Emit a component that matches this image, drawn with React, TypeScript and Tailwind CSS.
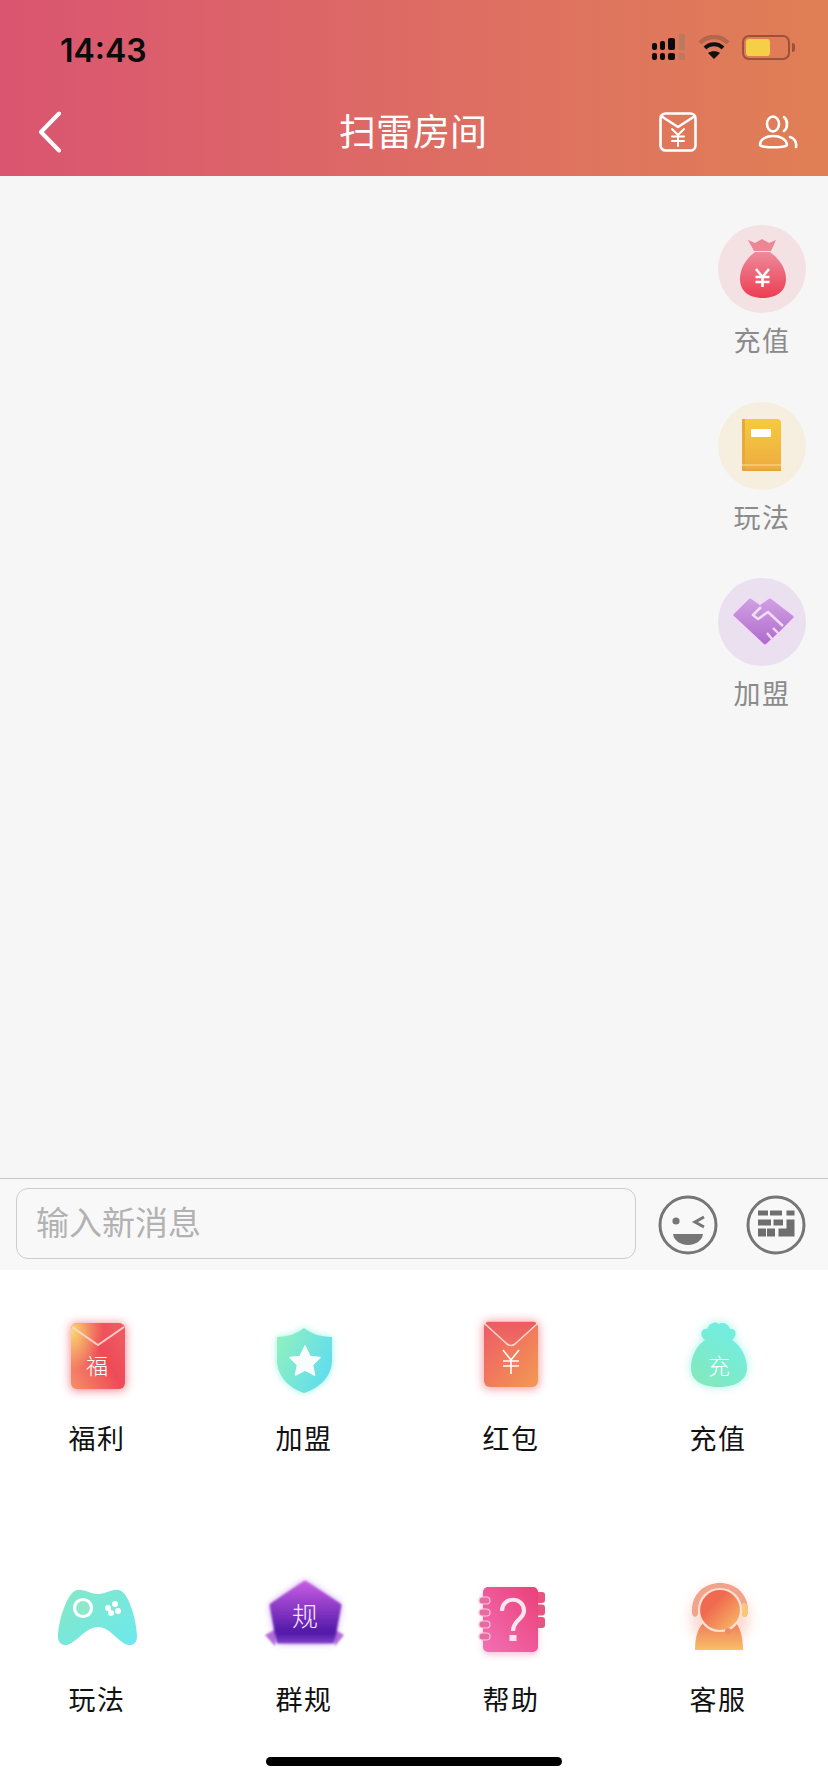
const cjk = { fontFamily: '"Noto Sans CJK SC", sans-serif' };

function BackIcon() {
  return (
    <svg width="24" height="42" viewBox="0 0 24 42" fill="none" className="ml-[10px]">
      <path d="M21 2.5 L3 21 L21 39.5" stroke="#fff" strokeWidth="4" strokeLinecap="round" strokeLinejoin="round" />
    </svg>
  );
}

function PacketIcon() {
  return (
    <svg width="38" height="40" viewBox="0 0 38 40" fill="none" stroke="#fff" strokeWidth="2.6" strokeLinecap="round" strokeLinejoin="round">
      <rect x="1.5" y="1.5" width="35" height="37" rx="5" />
      <path d="M2 4 L19 15 L36 4" />
      <path d="M13 17 L19 23 L25 17 M19 23 V34 M13 24.5 H25 M13 29 H25" strokeWidth="2" />
    </svg>
  );
}

function UsersIcon() {
  return (
    <svg width="40" height="34" viewBox="0 0 40 34" fill="none" stroke="#fff" strokeWidth="2.6" strokeLinecap="round">
      <ellipse cx="15" cy="9" rx="6" ry="7.5" />
      <path d="M26 2 C30 5 30 13 26 16" />
      <path d="M2 30 C2 18 28 18 29 30 C29 33 2 33 2 30 Z" />
      <path d="M32 22 C36 23 39 27 38 32" />
    </svg>
  );
}

function SignalIcon() {
  return (
    <svg width="34" height="27" viewBox="0 0 34 27">
      <g fill="#0b0b0b">
        <rect x="0" y="9" width="5" height="7" rx="2" />
        <rect x="0" y="19" width="5" height="7" rx="2" />
        <rect x="8" y="7" width="5" height="9" rx="2" />
        <rect x="8" y="19" width="5" height="7" rx="2" />
        <rect x="16" y="4" width="7" height="12" rx="2" />
        <rect x="16" y="19" width="7" height="7" rx="2" />
      </g>
      <g fill="#b97a5f">
        <rect x="27" y="0" width="6" height="16" rx="1" />
        <rect x="27" y="19" width="6" height="7" rx="1" />
      </g>
    </svg>
  );
}

function WifiIcon() {
  return (
    <svg width="32" height="25" viewBox="0 0 32 25" fill="none" strokeLinecap="butt">
      <path d="M2 8 C10 0 22 0 30 8" stroke="#b5654c" strokeWidth="4.5" />
      <path d="M7 13 C12 8 20 8 25 13" stroke="#111" strokeWidth="4" />
      <path d="M16 24 L10 18 C13 15.5 19 15.5 22 18 Z" fill="#111" />
    </svg>
  );
}

function BatteryIcon() {
  return (
    <div className="flex items-center">
      <div className="w-[48px] h-[25px] rounded-[7px] border-[2.5px] border-[#9c5139] p-[2px] flex">
        <div className="w-[24px] h-full rounded-[3px] bg-[#f5cf45]" />
      </div>
      <div className="w-[3px] h-[9px] ml-[2px] rounded-r-[3px] bg-[#9c5139]" />
    </div>
  );
}

function MoneyBag() {
  return (
    <svg width="88" height="88" viewBox="0 0 88 88">
      <defs>
        <linearGradient id="sbag" x1="0" y1="0" x2="0" y2="1">
          <stop offset="0" stopColor="#ec8b9b" />
          <stop offset="1" stopColor="#ee3c52" />
        </linearGradient>
      </defs>
      <path d="M30 15 L37 18 L44 14 L51 18 L58 15 L53 26 H36 Z" fill="#ec8695" />
      <path d="M37 27 H52 C60 33 68 42 68 54 C68 67 57 73 45 73 C32 73 22 67 22 54 C22 42 29 33 37 27 Z" fill="url(#sbag)" />
      <path d="M38 44 L44.5 52 L51 44 M44.5 52 V62 M37.5 52 H51.5 M37.5 57 H51.5" fill="none" stroke="#fff" strokeWidth="2.6" />
    </svg>
  );
}

function BookIcon() {
  return (
    <svg width="88" height="88" viewBox="0 0 88 88">
      <defs>
        <linearGradient id="sbook" x1="0" y1="0" x2="0" y2="1">
          <stop offset="0" stopColor="#f6ca3d" />
          <stop offset="1" stopColor="#edac42" />
        </linearGradient>
      </defs>
      <path d="M24 17 H59 Q63 17 63 21 V69 H27 Q24 69 24 66 Z" fill="url(#sbook)" />
      <rect x="24" y="17" width="3" height="52" fill="#e9a93a" />
      <rect x="24" y="62" width="39" height="2" fill="#f3c86f" />
      <rect x="24" y="67" width="39" height="2" fill="#e7a43a" />
      <rect x="33" y="27" width="20" height="8" rx="1" fill="#fff" />
    </svg>
  );
}

function HandshakeIcon() {
  const outline = "M17 37 L32 22 L42 29 L52 22 L74 39 L60 53 L47 65 Z";
  return (
    <svg width="88" height="88" viewBox="0 0 88 88">
      <defs>
        <linearGradient id="shand" x1="0" y1="0" x2="0" y2="1">
          <stop offset="0" stopColor="#cf9fe2" />
          <stop offset="1" stopColor="#b06ccd" />
        </linearGradient>
      </defs>
      <path d={outline} fill="#f3d9f8" stroke="#f3d9f8" strokeWidth="6" strokeLinejoin="round" />
      <path d={outline} fill="url(#shand)" stroke="url(#shand)" strokeWidth="3" strokeLinejoin="round" />
      <path d="M43 29 L35 37 L40 41 L50 34 L65 48" fill="none" stroke="#f0dcf6" strokeWidth="2.6" strokeLinejoin="round" />
      <path d="M49 55 L54 61 M55 50 L60 55" stroke="#f0dcf6" strokeWidth="2.4" />
    </svg>
  );
}

function SideItem({ label, bg, children }: { label: string; bg: string; children: React.ReactNode }) {
  return (
    <div className="flex flex-col items-center w-[88px] h-[176.5px]">
      <div className={`w-[88px] h-[88px] rounded-full ${bg}`}>{children}</div>
      <div className="mt-[9px] text-[27px] leading-[36px] tracking-[1.5px] text-[#8b8b8b]">{label}</div>
    </div>
  );
}

function WinkIcon() {
  return (
    <svg width="60" height="60" viewBox="0 0 60 60" fill="none">
      <circle cx="30" cy="30" r="28" stroke="#767676" strokeWidth="3" />
      <circle cx="18" cy="26" r="3.6" fill="#767676" />
      <path d="M46 22 L37 27 L46 32" stroke="#767676" strokeWidth="3" />
      <path d="M15 39 H45 C44 46 37 50 30 50 C23 50 16 46 15 39 Z" fill="#767676" />
    </svg>
  );
}

function KeyboardIcon() {
  const keys = [
    [12, 15.5, 10, 5], [24, 15.5, 12, 5], [40.5, 15.5, 8, 5],
    [12, 24.5, 13, 6], [27.5, 24.5, 9.5, 6],
    [12, 33.5, 8, 8], [21, 33.5, 8, 8],
  ];
  return (
    <svg width="60" height="60" viewBox="0 0 60 60" fill="none">
      <circle cx="30" cy="30" r="28" stroke="#767676" strokeWidth="3" />
      {keys.map(([x, y, w, h]) => (
        <rect key={`${x}-${y}`} x={x} y={y} width={w} height={h} fill="#6e6e6e" />
      ))}
      <path d="M40.5 24.5 H48.5 V41.5 H32.5 V33.5 H40.5 Z" fill="#6e6e6e" />
    </svg>
  );
}

function Glow({ id, sd = 5 }: { id: string; sd?: number }) {
  return (
    <filter id={id} x="-50%" y="-50%" width="200%" height="200%">
      <feGaussianBlur stdDeviation={sd} />
    </filter>
  );
}

function GlyphText({ x, y, size, children, fill = "#fff" }: { x: number; y: number; size: number; children: string; fill?: string }) {
  return (
    <text x={x} y={y} fontSize={size} fill={fill} textAnchor="middle" fontFamily='"Noto Sans CJK SC", sans-serif' fontWeight="300">
      {children}
    </text>
  );
}

function FuliIcon() {
  return (
    <>
      <defs>
        <linearGradient id="fuli" x1="0" y1="1" x2="1" y2="0.3">
          <stop offset="0" stopColor="#f59068" />
          <stop offset="0.65" stopColor="#ee4a58" />
          <stop offset="1" stopColor="#ee5a60" />
        </linearGradient>
        <radialGradient id="fuliTop" cx="0" cy="0.12" r="0.6">
          <stop offset="0" stopColor="#f9dc70" />
          <stop offset="1" stopColor="#f9dc70" stopOpacity="0" />
        </radialGradient>
        <Glow id="gfuli" />
      </defs>
      <rect x="23" y="13" width="56" height="68" rx="6" fill="#f06a7a" opacity="0.75" filter="url(#gfuli)" />
      <rect x="24" y="13" width="54" height="66" rx="6" fill="url(#fuli)" />
      <rect x="24" y="13" width="54" height="66" rx="6" fill="url(#fuliTop)" />
      <path d="M25 17 L51 35 L77 17" fill="none" stroke="#fbd9d4" strokeWidth="2" opacity="0.9" />
      <GlyphText x={50} y={64} size={22}>福</GlyphText>
    </>
  );
}

function ShieldIcon() {
  const d = "M50 18 C56 23 66 27 78 27 V50 C78 66 66 78 50 83 C35 78 23 66 23 50 V27 C34 27 44 23 50 18 Z";
  return (
    <>
      <defs>
        <linearGradient id="shield" x1="0" y1="0.2" x2="1" y2="0.7">
          <stop offset="0" stopColor="#8ff0c0" />
          <stop offset="1" stopColor="#5fdcf0" />
        </linearGradient>
        <Glow id="gshield" sd={3.5} />
      </defs>
      <path d={d} fill="#80f3e0" opacity="0.8" filter="url(#gshield)" />
      <path d={d} fill="url(#shield)" />
      <path d="M51 36 L56 46.5 L66 47.5 L58.5 55 L60.5 65 L51 60 L41.5 65 L43.5 55 L36 47.5 L46 46.5 Z" fill="#fff" opacity="0.95" stroke="#fff" strokeWidth="1.5" strokeLinejoin="round" />
    </>
  );
}

function PacketColorIcon() {
  return (
    <>
      <defs>
        <linearGradient id="pkt" x1="0" y1="0" x2="1" y2="1">
          <stop offset="0" stopColor="#ee5a66" />
          <stop offset="1" stopColor="#f29a52" />
        </linearGradient>
        <linearGradient id="pktflap" x1="0" y1="0" x2="0" y2="1">
          <stop offset="0" stopColor="#ec5a62" />
          <stop offset="1" stopColor="#ee6f62" />
        </linearGradient>
        <Glow id="gpkt" />
      </defs>
      <rect x="22" y="11" width="56" height="68" rx="6" fill="#f0727c" opacity="0.7" filter="url(#gpkt)" />
      <rect x="23" y="11" width="54" height="66" rx="6" fill="url(#pkt)" />
      <path d="M24 14 Q24 11 28 11 H72 Q76 11 76 14 L54 34 Q50 37 46 34 Z" fill="url(#pktflap)" stroke="#fbd6cf" strokeWidth="1.6" />
      <path d="M42 40 L50 50 L58 40 M50 50 V64 M42 51 H58 M42 56 H58" fill="none" stroke="#fff" strokeWidth="1.6" />
    </>
  );
}

function BagColorIcon() {
  const d = "M37 30 C31 25 33 18 39 19 C42 12 48 11 51 14 C54 12 60 13 62 19 C68 18 70 25 64 30 C73 36 79 47 79 58 C79 71 66 77 51 77 C35 77 23 71 23 58 C23 47 28 36 37 30 Z";
  return (
    <>
      <defs>
        <linearGradient id="bag" x1="0.8" y1="0" x2="0.2" y2="1">
          <stop offset="0" stopColor="#70eee6" />
          <stop offset="1" stopColor="#84e8bd" />
        </linearGradient>
        <Glow id="gbag" />
      </defs>
      <path d={d} fill="#80f0d8" opacity="0.7" filter="url(#gbag)" />
      <path d={d} fill="url(#bag)" />
      <GlyphText x={51} y={64} size={22}>充</GlyphText>
    </>
  );
}

function GamepadIcon() {
  return (
    <>
      <defs>
        <linearGradient id="pad" x1="0" y1="0" x2="1" y2="1">
          <stop offset="0" stopColor="#85e8c6" />
          <stop offset="1" stopColor="#6ce8ee" />
        </linearGradient>
      </defs>
      <path d="M30 19 C38 18 42 23 51 23 C60 23 64 18 72 19 C82 21 90 51 90 66 C90 73 84 76 78 73 C69 68 62 56 51 56 C40 56 32 68 23 73 C17 76 11 73 11 66 C11 51 20 21 30 19 Z" fill="url(#pad)" />
      <circle cx="36" cy="37" r="8.5" fill="#8de8cc" stroke="#fff" strokeWidth="3.2" />
      <g fill="#fff">
        <circle cx="61" cy="37" r="3" />
        <circle cx="68" cy="33" r="3" />
        <circle cx="71" cy="40" r="3" />
        <circle cx="64" cy="42" r="3" />
      </g>
    </>
  );
}

function RulesIcon() {
  const d = "M51 11 L86 34 L79 71 H24 L17 34 Z";
  return (
    <>
      <defs>
        <linearGradient id="pent" x1="0" y1="0" x2="0" y2="1">
          <stop offset="0" stopColor="#c75ce2" />
          <stop offset="0.85" stopColor="#5018a8" />
          <stop offset="1" stopColor="#7a3cc4" />
        </linearGradient>
        <Glow id="gpent" sd={4} />
        <Glow id="soft" sd={1} />
      </defs>
      <path d={d} fill="#9a50dc" opacity="0.7" filter="url(#gpent)" />
      <path d="M11 64 L24 57 L21 75 Z M90 64 L78 57 L81 75 Z" fill="#b26ad8" filter="url(#soft)" />
      <path d={d} fill="url(#pent)" stroke="url(#pent)" strokeWidth="3" strokeLinejoin="round" filter="url(#soft)" />
      <GlyphText x={51} y={55} size={26} fill="#f8e8ff">规</GlyphText>
    </>
  );
}

function NotebookIcon() {
  return (
    <>
      <defs>
        <linearGradient id="note" x1="0" y1="1" x2="1" y2="0">
          <stop offset="0" stopColor="#f270b5" />
          <stop offset="1" stopColor="#ea4078" />
        </linearGradient>
        <Glow id="gnote" sd={3} />
      </defs>
      <rect x="22" y="19" width="55" height="65" rx="5" fill="#f79cc4" opacity="0.6" filter="url(#gnote)" />
      <g fill="#e8537f">
        <rect x="74" y="21" width="10" height="11" rx="3" />
        <rect x="74" y="33.5" width="10" height="11" rx="3" />
        <rect x="74" y="46" width="10" height="11" rx="3" />
      </g>
      <rect x="22" y="16" width="55" height="65" rx="5" fill="url(#note)" />
      <g fill="#e96aa0" stroke="#fbc6dc" strokeWidth="1.2">
        <rect x="18" y="26" width="11" height="7" rx="3.5" />
        <rect x="18" y="38" width="11" height="7" rx="3.5" />
        <rect x="18" y="50" width="11" height="7" rx="3.5" />
        <rect x="18" y="62" width="11" height="7" rx="3.5" />
      </g>
      <path d="M41 40 C41 25 63 25 63 40 C63 48 52 49 52 60" fill="none" stroke="#fde4ef" strokeWidth="4.2" />
      <rect x="48.5" y="64" width="7" height="6" fill="#fde4ef" />
    </>
  );
}

function AgentIcon() {
  return (
    <>
      <defs>
        <linearGradient id="head" x1="0" y1="0" x2="1" y2="1">
          <stop offset="0.35" stopColor="#f06a50" />
          <stop offset="1" stopColor="#f8c36a" />
        </linearGradient>
        <linearGradient id="body" x1="0" y1="0" x2="0" y2="1">
          <stop offset="0" stopColor="#f0785a" />
          <stop offset="1" stopColor="#f8bf68" />
        </linearGradient>
        <Glow id="gagent" sd={6} />
        <Glow id="softa" sd={0.7} />
      </defs>
      <circle cx="52" cy="46" r="30" fill="#f8a890" opacity="0.4" filter="url(#gagent)" />
      <g filter="url(#softa)">
        <path d="M24 42 C22 2 82 2 80 42 C78 50 72 44 73 38 C70 16 34 16 31 38 C32 44 26 50 24 42 Z" fill="#f2a38c" />
        <ellipse cx="76" cy="39" rx="4" ry="7" fill="#f8c878" />
        <path d="M27 79 C27 66 30 55 38 50 H66 C72 55 75 66 75 79 Z" fill="url(#body)" />
        <circle cx="52" cy="39" r="21" fill="url(#head)" stroke="#fde0d4" strokeWidth="2.2" />
        <circle cx="60" cy="60" r="3" fill="#f08a64" />
      </g>
    </>
  );
}

const tools = [
  { label: "福利", icon: <FuliIcon /> },
  { label: "加盟", icon: <ShieldIcon /> },
  { label: "红包", icon: <PacketColorIcon /> },
  { label: "充值", icon: <BagColorIcon /> },
  { label: "玩法", icon: <GamepadIcon /> },
  { label: "群规", icon: <RulesIcon /> },
  { label: "帮助", icon: <NotebookIcon /> },
  { label: "客服", icon: <AgentIcon /> },
];

export default function App() {
  return (
    <div className="w-[828px] h-[1792px] flex flex-col bg-white overflow-hidden" style={cjk}>
      {/* header */}
      <div className="h-[176px] bg-gradient-to-r from-[#da5570] to-[#e07f55]">
        <div className="h-[88px] pt-[6px] pl-[60px] pr-[33px] flex items-center justify-between">
          <span className="mt-[8px] text-[32px] font-semibold text-[#0b0b0b] font-['Inter']">14:43</span>
          <div className="flex items-center gap-[12px]">
            <SignalIcon />
            <WifiIcon />
            <BatteryIcon />
          </div>
        </div>
        <div className="h-[88px] pl-[28px] pr-[30px] grid grid-cols-[1fr_auto_1fr] items-center">
          <BackIcon />
          <div className="-mt-[4px] text-[37px] leading-[44px] text-white">扫雷房间</div>
          <div className="flex items-center justify-end gap-[61px]">
            <PacketIcon />
            <UsersIcon />
          </div>
        </div>
      </div>

      {/* chat area */}
      <div className="h-[1002px] bg-[#f6f6f6] pt-[49px] pr-[22px] flex flex-col items-end">
        <SideItem label="充值" bg="bg-[#f3e1e4]"><MoneyBag /></SideItem>
        <SideItem label="玩法" bg="bg-[#f6efdf]"><BookIcon /></SideItem>
        <SideItem label="加盟" bg="bg-[#ebe0f0]"><HandshakeIcon /></SideItem>
      </div>

      {/* input bar */}
      <div className="h-[92px] border-t border-[#c6c6c6] bg-[#f8f8f8] pl-[16px] pr-[22px] flex items-center">
        <input
          placeholder="输入新消息"
          className="w-[620px] h-[71px] -mt-[2px] pb-[6px] rounded-[12px] border border-[#cdcdcd] px-[19px] text-[33px] outline-none placeholder:text-[#b2b2b2]"
        />
        <div className="ml-auto flex gap-[28px]">
          <WinkIcon />
          <KeyboardIcon />
        </div>
      </div>

      {/* tools */}
      <div className="pt-[40px] pl-[6px] grid grid-cols-[repeat(4,182px)] gap-x-[25px] gap-y-[115px]">
        {tools.map(t => (
          <div key={t.label} className="flex flex-col items-center">
            <svg width="100" height="90" viewBox="0 0 100 90">{t.icon}</svg>
            <div className="mt-[20px] text-[27px] leading-[36px] tracking-[1.5px] text-[#111]">{t.label}</div>
          </div>
        ))}
      </div>

      <div className="mt-[40px] mx-auto w-[296px] h-[9px] rounded-full bg-black" />
    </div>
  );
}
